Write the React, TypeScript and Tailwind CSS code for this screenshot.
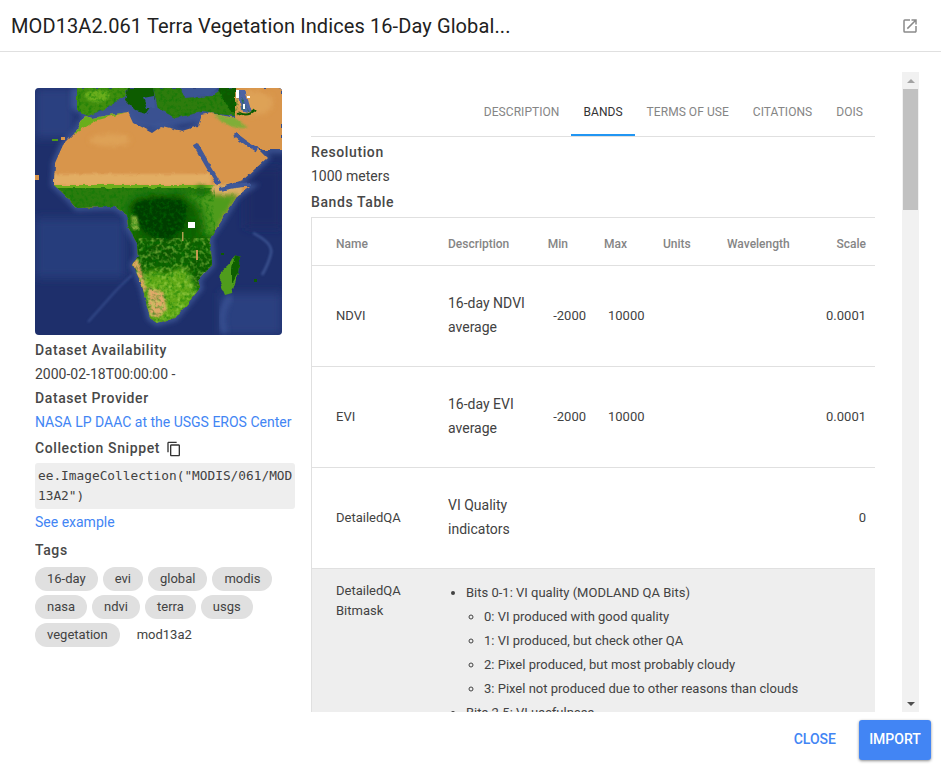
import { MdContentCopy, MdOpenInNew } from "react-icons/md";

const tabs = ["DESCRIPTION", "BANDS", "TERMS OF USE", "CITATIONS", "DOIS"];
const chips = ["16-day", "evi", "global", "modis", "nasa", "ndvi", "terra", "usgs", "vegetation"];
const cols = "grid grid-cols-[124px_96px_58px_60px_64px_96px_65px] items-center";

// Africa, Arabia and Iran as one shape, the narrow seas are painted over it
const land =
  "57,30 93,24 98,35 117,45 127,38 147,43 163,38 167,27 175,25 200,30 200,0 247,0 247,62 228,62 222,60 232,70 208,92 187,99 215,99 203,107 187,132 175,150 177,177 163,192 165,200 157,210 140,230 122,235 115,230 107,197 98,177 103,169 102,155 93,139 92,127 80,119 70,119 42,120 30,107 19,97 20,75 28,57 40,45 50,28";
const europe = "42,0 93,0 90,8 72,20 53,28 42,23";
const east = "118,0 145,0 150,10 178,8 190,0 203,0 215,25 200,28 167,24 140,30 123,20";

function MapPicture() {
  return (
    <svg viewBox="0 0 247 247" className="block h-[247px] w-[247px] rounded-[4px]">
      <defs>
        <filter id="rough" x="0" y="0" width="100%" height="100%">
          <feTurbulence type="fractalNoise" baseFrequency="0.14" numOctaves="2" seed="4" />
          <feDisplacementMap in="SourceGraphic" scale="4" xChannelSelector="R" yChannelSelector="G" />
        </filter>
        <filter id="soft" x="-30%" y="-30%" width="160%" height="160%">
          <feGaussianBlur stdDeviation="5" />
        </filter>
        <filter id="mid" x="-30%" y="-30%" width="160%" height="160%">
          <feGaussianBlur stdDeviation="2.5" />
        </filter>
        <filter id="fine" x="-30%" y="-30%" width="160%" height="160%">
          <feGaussianBlur stdDeviation="1.2" />
        </filter>
        <filter id="grain" x="0" y="0" width="100%" height="100%">
          <feTurbulence type="fractalNoise" baseFrequency="0.28" numOctaves="3" seed="9" />
          <feColorMatrix values="0 0 0 0 0  0 0 0 0 0.18  0 0 0 0 0  0 0 0 1.5 -0.68" />
          <feComposite in2="SourceGraphic" operator="in" />
        </filter>
        <filter id="fleck" x="0" y="0" width="100%" height="100%">
          <feTurbulence type="fractalNoise" baseFrequency="0.24" numOctaves="2" seed="21" />
          <feColorMatrix values="0 0 0 0 0.45  0 0 0 0 0.72  0 0 0 0 0.1  0 0 0 1.5 -0.68" />
          <feComposite in2="SourceGraphic" operator="in" />
        </filter>
        <clipPath id="land">
          <polygon points={land} />
        </clipPath>
        <clipPath id="north">
          <polygon points={europe} />
          <polygon points={east} />
        </clipPath>
      </defs>

      {/* ocean */}
      <rect width="247" height="247" fill="#1e2f6b" />
      <rect x="0" y="130" width="90" height="60" fill="#283c7b" filter="url(#soft)" />
      <rect x="185" y="205" width="62" height="42" fill="#2a3f80" filter="url(#soft)" />
      <rect x="210" y="80" width="37" height="60" fill="#1b2b66" filter="url(#soft)" />
      <rect x="0" y="0" width="40" height="50" fill="#2a3f80" filter="url(#soft)" />
      <polygon points={land} fill="none" stroke="#3a5292" strokeWidth="6" filter="url(#mid)" />
      <polygon points="36,0 247,0 247,20 120,42 50,30 36,20" fill="#3c5696" filter="url(#mid)" opacity="0.9" />
      <path d="M53 234 Q70 215 77 207 T97 187" stroke="#3d5596" strokeWidth="2" fill="none" filter="url(#fine)" opacity="0.7" />
      <path d="M218 145 Q238 155 236 165 T227 187" stroke="#46609f" strokeWidth="2.5" fill="none" filter="url(#fine)" opacity="0.75" />
      <path d="M190 245 Q182 225 196 208" stroke="#3a5294" strokeWidth="7" fill="none" filter="url(#mid)" opacity="0.8" />

      <g filter="url(#rough)">
        {/* Iberia, Italy, Balkans and Turkey */}
        <polygon points={europe} fill="#3f8d10" />
        <ellipse cx="62" cy="8" rx="12" ry="6" fill="#6aae1e" filter="url(#fine)" />
        <polygon points="93,0 118,0 120,12 111,25 100,22 90,12" fill="#0e5c04" />
        <polygon points="108,10 119,8 120,20 112,20" fill="#3c5696" />
        <polygon points={east} fill="#2d7c0a" />
        <polygon points="182,0 203,0 213,24 196,24" fill="#0c5a03" />
        <polygon points="145,0 182,0 173,7 150,9" fill="#3b5494" />

        {/* the land: desert first, then the green belts over it */}
        <g clipPath="url(#land)">
          <rect width="247" height="247" fill="#d8954b" />
          <ellipse cx="75" cy="52" rx="20" ry="6" fill="#dea257" filter="url(#mid)" />
          <ellipse cx="218" cy="15" rx="20" ry="12" fill="#dea257" filter="url(#mid)" />
          <rect x="0" y="86" width="175" height="11" fill="#e2ad63" filter="url(#fine)" />
          <polygon points="40,45 50,28 93,24 62,32 46,42" fill="#6aae1e" />
          <polygon points="178,25 200,30 213,40 205,40 190,36" fill="#7fae38" filter="url(#fine)" />

          <rect x="0" y="97" width="180" height="150" fill="#2a7c0c" />
          <rect x="0" y="97" width="180" height="3" fill="#6cae1e" />
          <rect x="177" y="97" width="30" height="10" fill="#dcae66" filter="url(#fine)" />
          <polygon points="150,107 190,107 204,107 188,132 176,150 160,140 150,122" fill="#4f9c1a" filter="url(#mid)" />
          <ellipse cx="166" cy="103" rx="5" ry="6" fill="#1f7008" filter="url(#mid)" />
          <rect x="90" y="148" width="90" height="36" fill="#0f5f05" filter="url(#soft)" />
          <polygon points="92,118 105,108 150,106 165,118 170,140 160,155 120,160 100,150" fill="#0f5f05" filter="url(#soft)" />
          <polygon points="97,116 112,110 146,110 153,120 150,135 140,150 124,152 112,144 100,136" fill="#003e00" filter="url(#mid)" />
          <polygon points="104,192 118,182 130,187 145,179 158,189 160,215 140,232 116,236 106,200" fill="#5fa816" filter="url(#mid)" />
          <polygon points="155,168 180,168 180,195 165,203 157,190" fill="#0c5a03" filter="url(#mid)" />
          <ellipse cx="125" cy="165" rx="16" ry="8" fill="#0a5402" filter="url(#mid)" />
          <polygon points="113,200 128,203 132,222 122,230 114,226" fill="#e0a868" filter="url(#fine)" />
          <polygon points="96,174 103,172 112,200 108,205" fill="#e0a060" filter="url(#fine)" />
          <polygon points="96,128 102,128 104,142 98,142" fill="#7fae38" filter="url(#fine)" />
        </g>

        {/* narrow seas */}
        <path d="M160 55 L172 76 L184 96" stroke="#3f5899" strokeWidth="5" fill="none" />
        <path d="M185 101 L200 98 L216 96" stroke="#3f5899" strokeWidth="4" fill="none" />
        <path d="M200 47 L212 56 L222 62" stroke="#3f5899" strokeWidth="5" fill="none" />
        <polygon points="202,2 210,2 217,25 206,22" fill="#4d64a4" />
        <path d="M203 24 Q212 30 220 22" stroke="#0e5c04" strokeWidth="2" fill="none" />

        {/* Madagascar */}
        <polygon points="200,167 205,170 203,185 197,205 190,207 185,195 186,183 193,177" fill="#4f9c1a" />
        <polygon points="200,167 205,170 203,185 197,196 197,180" fill="#0f5f05" />
      </g>

      {/* mottling on the green parts */}
      <g clipPath="url(#land)">
        <rect y="100" width="180" height="147" fill="#000" filter="url(#grain)" />
        <rect y="150" width="180" height="97" fill="#000" filter="url(#fleck)" />
      </g>
      <g clipPath="url(#north)">
        <rect width="247" height="30" fill="#000" filter="url(#grain)" />
      </g>

      {/* cloud, lake and island specks */}
      <rect x="153" y="134" width="7" height="6" fill="#ffffff" />
      <rect x="147" y="144" width="1.5" height="9" fill="#b0a050" />
      <rect x="161" y="162" width="2" height="10" fill="#c79a50" />
      <rect x="201" y="2" width="3" height="8" fill="#ffffff" />
      <rect x="212" y="8" width="3" height="2" fill="#ffffff" />
      <rect x="208" y="16" width="2" height="5" fill="#ffffff" />
      <rect x="0" y="87" width="4" height="5" fill="#d9954a" />
      <rect x="17" y="51" width="6" height="2" fill="#4f9a18" />
      <rect x="26" y="49" width="4" height="3" fill="#d9954a" />
      <rect x="219" y="191" width="3" height="3" fill="#0f5a04" />
      <rect x="186" y="165" width="3" height="2" fill="#0f5a04" />
    </svg>
  );
}

function Heading({ children }: { children: React.ReactNode }) {
  return <div className="h-6 text-[14px] font-medium leading-6 tracking-[0.6px] text-[#484848]">{children}</div>;
}

function DataRow({ name, desc, scale, range }: { name: string; desc: string[]; scale: string; range?: boolean }) {
  return (
    <div className={`${cols} h-[101px] border-b border-[#e0e0e0] text-[13px] leading-6`}>
      <div className="pl-6">{name}</div>
      <div className="pb-[3px] pl-3 text-[14px]">
        {desc.map((d) => (
          <div key={d}>{d}</div>
        ))}
      </div>
      <div className="pr-1 text-right">{range && "-2000"}</div>
      <div className="pl-[18px]">{range && "10000"}</div>
      <div />
      <div />
      <div className="pr-[9px] text-right">{scale}</div>
    </div>
  );
}

export default function App() {
  return (
    <div className="flex h-screen flex-col overflow-hidden bg-white font-['Roboto',sans-serif] text-[#424242]">
      {/* title bar */}
      <div className="flex h-[52px] shrink-0 items-center justify-between border-b border-[#e0e0e0] pl-[11px] pr-[22px]">
        <h1 className="text-[20px] font-normal tracking-[0.1px] text-[#212121]">
          MOD13A2.061 Terra Vegetation Indices 16-Day Global...
        </h1>
        <MdOpenInNew className="h-[18px] w-[18px] text-[#8a8a8a]" />
      </div>

      <div className="mt-5 flex h-[640px] shrink-0 pl-[35px] pr-[22px]">
        <div className="flex flex-1 gap-4 overflow-hidden">
          {/* left column */}
          <div className="w-[260px] shrink-0 pt-4">
            <MapPicture />
            <div className="mt-[3px]">
              <Heading>Dataset Availability</Heading>
              <div className="h-6 text-[14px] leading-6">2000-02-18T00:00:00 -</div>
              <Heading>Dataset Provider</Heading>
              <div className="h-6 text-[14px] leading-6 text-[#4285f4]">NASA LP DAAC at the USGS EROS Center</div>
              <div className="flex h-[28px] items-center gap-[6px] pt-px text-[#484848]">
                <span className="text-[14px] font-medium tracking-[0.6px]">Collection Snippet</span>
                <MdContentCopy className="h-4 w-4 text-[#333]" />
              </div>
              <div className="mt-[1px] h-[46px] rounded-[3px] bg-[#eeeeee] px-[3px] pt-[3px] font-['DejaVu_Sans_Mono',monospace] text-[12.8px] leading-[20px]">
                ee.ImageCollection("MODIS/061/MOD
                <br />
                13A2")
              </div>
              <div className="mt-[1px] h-6 text-[14px] leading-6 text-[#4285f4]">See example</div>
              <div className="mt-[4px] h-6 text-[14px] font-medium leading-6 tracking-[0.6px] text-[#484848]">Tags</div>
              <div className="mt-[5px] flex w-[245px] flex-wrap gap-x-[5px] gap-y-1">
                {chips.map((c) => (
                  <span key={c} className="h-6 rounded-full bg-[#e0e0e0] px-3 text-[13px] leading-6">
                    {c}
                  </span>
                ))}
                <span className="h-6 px-3 text-[13px] leading-6">mod13a2</span>
              </div>
            </div>
          </div>

          {/* right column */}
          <div className="w-[564px] shrink-0 pt-4">
            <div className="flex h-[49px] justify-end border-b border-[#e0e0e0]">
              {tabs.map((t) => (
                <div
                  key={t}
                  className={`flex h-[48px] items-center border-b-2 px-3 pt-[2px] text-[12px] tracking-[0.05px] ${
                    t === "BANDS" ? "border-[#2196f3] text-[#333]" : "border-transparent text-[#858585]"
                  }`}
                >
                  {t}
                </div>
              ))}
            </div>
            <div className="mt-[3px]">
              <Heading>Resolution</Heading>
              <div className="h-6 text-[14px] leading-6">1000 meters</div>
              <div className="mt-[2px]">
                <Heading>Bands Table</Heading>
              </div>
            </div>
            <div className="mt-[3px] border-l border-t border-[#e0e0e0]">
              <div className={`${cols} h-[48px] border-b border-[#e0e0e0] pt-[5px] text-[12px] font-medium text-[#858585]`}>
                <div className="pl-6">Name</div>
                <div className="pl-3">Description</div>
                <div className="pr-[22px] text-right">Min</div>
                <div className="pl-[14px]">Max</div>
                <div className="pl-[13px]">Units</div>
                <div className="pl-[13px]">Wavelength</div>
                <div className="pr-[9px] text-right">Scale</div>
              </div>
              <DataRow name="NDVI" desc={["16-day NDVI", "average"]} scale="0.0001" range />
              <DataRow name="EVI" desc={["16-day EVI", "average"]} scale="0.0001" range />
              <DataRow name="DetailedQA" desc={["VI Quality", "indicators"]} scale="0" />
              <div className="flex h-[160px] bg-[#eeeeee] text-[13px] leading-6">
                <div className="w-[124px] pl-6 pt-[12px] leading-[20px]">
                  DetailedQA
                  <br />
                  Bitmask
                </div>
                <div className="pl-[18px] pt-[12px]">
                  <ul className="list-disc pl-[12px]">
                    <li>
                      Bits 0-1: VI quality (MODLAND QA Bits)
                      <ul className="list-[circle] pl-[18px]">
                        <li>0: VI produced with good quality</li>
                        <li>1: VI produced, but check other QA</li>
                        <li>2: Pixel produced, but most probably cloudy</li>
                        <li>3: Pixel not produced due to other reasons than clouds</li>
                      </ul>
                    </li>
                    <li>Bits 2-5: VI usefulness</li>
                  </ul>
                </div>
              </div>
            </div>
          </div>
        </div>

        {/* scrollbar */}
        <div className="flex w-[17px] shrink-0 flex-col bg-[#f1f1f1]">
          <div className="flex h-[17px] items-center justify-center">
            <div className="h-0 w-0 border-x-4 border-b-4 border-x-transparent border-b-[#a3a3a3]" />
          </div>
          <div className="mx-px h-[121px] bg-[#c1c1c1]" />
          <div className="flex-1" />
          <div className="flex h-[17px] items-center justify-center">
            <div className="h-0 w-0 border-x-4 border-t-4 border-x-transparent border-t-[#505050]" />
          </div>
        </div>
      </div>

      {/* actions */}
      <div className="flex flex-1 items-start justify-end pr-[10px] pt-2">
        <button className="mr-[23px] h-10 pb-[2px] text-[14px] font-medium text-[#4285f4]">CLOSE</button>
        <button className="h-10 w-[72px] rounded-[3px] bg-[#4285f4] pb-[2px] text-[14px] font-medium text-white shadow-[0_1px_3px_rgba(0,0,0,0.45)]">
          IMPORT
        </button>
      </div>
    </div>
  );
}
